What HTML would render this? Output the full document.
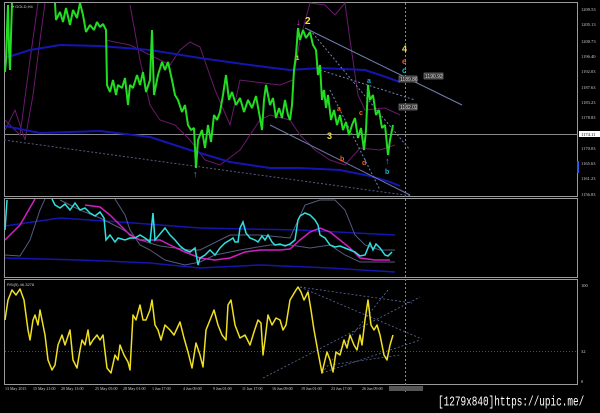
<!DOCTYPE html>
<html><head><style>
body{margin:0;background:#000;width:600px;height:413px;overflow:hidden;font-family:"Liberation Sans",sans-serif;position:relative}
svg{position:absolute;left:0;top:0}
.wm{position:absolute;left:438px;top:394px;width:160px;color:#fff;font-family:"Liberation Mono",monospace;font-size:9.4px;white-space:nowrap;transform:scaleY(1.45);transform-origin:0 0}
</style></head><body>
<svg width="600" height="413" viewBox="0 0 600 413">
<rect width="600" height="413" fill="#000"/>
<g fill="none" stroke="#9a9a9a" stroke-width="1">
<rect x="4.5" y="2.5" width="573" height="194"/>
<rect x="4.5" y="198.5" width="573" height="79"/>
<rect x="4.5" y="279.5" width="573" height="105"/>
</g>
<line x1="4" y1="134.5" x2="578" y2="134.5" stroke="#8a8a8a"/>
<line x1="405.5" y1="3" x2="405.5" y2="392" stroke="#888" stroke-dasharray="2,2"/>
<text x="12" y="8" fill="#ccc" font-size="4">▾ GOLD,H4</text>
<g fill="none">
<polyline stroke="#6a1a6a" stroke-width="1" points="5,130 15,110 25,140 33,95 40,40 45,3"/>
<polyline stroke="#6a1a6a" stroke-width="1" points="5,120 20,135 30,60 38,3"/>
<polyline stroke="#6a1a6a" stroke-width="1" points="130,5 140,60 150,105 160,120 175,125 190,140 205,160 220,165 240,150 260,120 270,115 290,120 300,135 315,150 330,160 345,165 360,148 380,150 395,145"/>
<polyline stroke="#6a1a6a" stroke-width="1" points="105,40 130,45 150,55 170,65 180,50 190,42 200,47 215,90 230,125 240,80 255,82 280,85 293,80 300,40 310,3 325,5 335,15 345,3 350,40 358,95 365,110 385,108 400,115"/>
<polyline stroke="#1515b0" stroke-width="2" points="5,58 30,50 60,45 100,46 150,50 200,58 250,65 290,70 320,68 365,70 380,75 400,82"/>
<polyline stroke="#1515b0" stroke-width="2" points="5,126 40,133 100,131 150,137 190,150 230,162 270,168 300,168 340,170 370,176 390,182 400,186"/>
<g stroke="#7080b0" stroke-width="1">
<line x1="305" y1="28" x2="462" y2="105"/>
<line x1="4" y1="140" x2="412" y2="196" stroke-dasharray="2,2" stroke="#555a80"/>
<line x1="270" y1="125" x2="410" y2="195"/>
<line x1="310" y1="30" x2="410" y2="150" stroke-dasharray="2,2"/>
<line x1="320" y1="70" x2="415" y2="100" stroke-dasharray="2,2"/>
<line x1="330" y1="90" x2="380" y2="190" stroke-dasharray="2,2"/>
</g>
<polyline stroke="#22dd22" stroke-width="2" stroke-linejoin="bevel" points="5,72 6,60 7,30 8,5 9,50 10,70 11,35 12,3"/>
<polyline stroke="#22dd22" stroke-width="2" stroke-linejoin="bevel" points="55,3 56,20 60,12 63,22 66,8 70,25 73,10 77,18 80,3 83,15 86,32 90,25 94,30 97,22 100,27 103,24 106,30 107,85 110,92 113,80 116,95 118,85 122,88 125,78 128,105 130,85 133,88 137,75 140,85 143,72 146,92 150,80 152,30 154,95 158,75 162,62 165,70 168,62 172,80 175,95 178,100 182,112 185,105 188,125 191,130 194,128 196,168 198,140 202,130 205,148 208,125 211,142 214,115 217,120 220,112 223,95 226,75 229,100 232,92 236,105 240,98 244,112 248,100 252,108 256,96 260,118 262,130 264,100 266,85 270,105 273,98 276,118 279,108 282,118 285,100 288,115 290,120 292,105 294,70 296,55 298,28 300,40 303,30 306,38 310,32 313,45 316,50 318,75 320,65 322,100 324,90 326,108 328,95 331,120 334,110 337,125 340,115 343,130 346,122 349,135 352,125 355,118 358,138 361,128 364,150 366,130 368,85 370,100 373,95 376,115 379,110 382,128 385,125 388,155 390,140 393,125"/>
</g>
<g font-family="Liberation Sans,sans-serif" font-weight="bold">
<text x="305" y="24" fill="#f0e040" font-size="10">2</text>
<text x="296" y="25" fill="#e040e0" font-size="9">↓</text>
<text x="296" y="60" fill="#f0e040" font-size="6">1</text>
<text x="402" y="52" fill="#f0e040" font-size="9">4</text>
<text x="402" y="64" fill="#ff5a1a" font-size="8">e</text>
<text x="402" y="73" fill="#20b0d0" font-size="8">c</text>
<text x="367" y="83" fill="#20b0d0" font-size="7">a</text>
<text x="337" y="111" fill="#ff5a1a" font-size="7">a</text>
<text x="359" y="115" fill="#ff5a1a" font-size="7">c</text>
<text x="327" y="139" fill="#f0e040" font-size="9">3</text>
<text x="340" y="161" fill="#ff5a1a" font-size="7">b</text>
<text x="362" y="165" fill="#ff5a1a" font-size="7">d</text>
<text x="385" y="174" fill="#20b0d0" font-size="7">b</text>
<text x="385" y="164" fill="#20b0d0" font-size="9">↑</text>
<text x="193" y="177" fill="#20b0d0" font-size="9">↑</text>
</g>
<g font-size="5" fill="#ddd" font-family="Liberation Sans,sans-serif">
<rect x="399" y="76" width="18" height="6" fill="#333" stroke="#aaa" stroke-width="0.5"/><text x="400" y="81">1189.86</text>
<rect x="424" y="73" width="19" height="6" fill="#333" stroke="#aaa" stroke-width="0.5"/><text x="425" y="78">1190.92</text>
<rect x="399" y="104" width="18" height="6" fill="#333" stroke="#aaa" stroke-width="0.5"/><text x="400" y="109">1182.02</text>
</g>
<g font-size="4.5" fill="#ccc" font-family="Liberation Serif,serif">
<text x="581" y="11">1209.53</text><text x="581" y="26">1205.13</text><text x="581" y="43">1200.73</text>
<text x="581" y="58">1196.40</text><text x="581" y="73">1192.03</text><text x="581" y="89">1187.63</text>
<text x="581" y="104">1183.23</text><text x="581" y="119">1178.83</text>
<rect x="579" y="131" width="21" height="6" fill="#fff"/><text x="581" y="136" fill="#000">1174.11</text>
<text x="581" y="150">1170.03</text><text x="581" y="165">1165.63</text><text x="581" y="180">1161.23</text><text x="581" y="196">1156.83</text>
<text x="581" y="287">100</text><text x="581" y="353">32</text><text x="581" y="383">0</text>
</g>
<rect x="577" y="161" width="2" height="12" fill="#2a5adf"/>
<g fill="none">
<polyline stroke="#1515b0" stroke-width="1.5" points="5,226 60,218 120,222 200,228 300,230 395,235"/>
<polyline stroke="#1515b0" stroke-width="1.5" points="5,258 80,260 150,263 200,268 260,265 330,268 395,272"/>
<polyline stroke="#555a80" stroke-width="1" points="5,255 20,256 30,240 40,210 45,199"/>
<polyline stroke="#555a80" stroke-width="1" points="60,200 80,210 100,218 120,228 140,240 160,246 190,250 200,250 220,240 230,235 260,235 290,238 305,205 320,200 335,200 345,210 355,235 365,245 380,250 395,250"/>
<polyline stroke="#555a80" stroke-width="1" points="115,199 125,215 130,230 140,245 150,250 165,260 185,265 200,262 215,255 240,250 270,245 290,245 310,248 330,245 345,255 360,262 380,262 395,262"/>
<polyline stroke="#d020c0" stroke-width="1.5" points="5,240 20,225 35,199"/>
<polyline stroke="#d020c0" stroke-width="1.5" points="85,205 100,207 110,215 120,225 130,235 140,240 160,240 170,245 185,252 200,258 215,260 230,258 245,252 260,250 280,250 290,249 300,240 310,232 320,228 330,232 340,240 350,248 360,258 375,260 390,260"/>
<polyline stroke="#30e0e0" stroke-width="1.5" points="5,230 7,200"/>
<polyline stroke="#30e0e0" stroke-width="1.5" points="52,199 55,205 60,208 65,204 70,210 75,203 80,210 85,208 90,213 95,216 100,212 104,218 106,240 110,235 115,242 118,238 125,240 130,238 135,238 140,235 145,238 150,242 153,213 155,240 160,234 165,228 170,235 175,240 180,246 185,250 190,252 195,248 198,265 200,258 205,255 210,250 215,255 220,248 225,243 230,240 233,238 235,242 238,242 240,228 243,222 246,233 250,238 255,240 258,242 262,236 265,240 268,235 272,242 275,245 280,244 285,246 290,244 295,240 298,220 300,216 305,213 310,215 315,220 318,225 320,235 325,238 330,245 335,247 340,246 345,248 350,250 355,252 360,256 365,255 370,243 373,250 376,244 380,248 385,255 388,256 392,252"/>
</g>
<line x1="5" y1="351.5" x2="577" y2="351.5" stroke="#3a4aa0" stroke-dasharray="1,2"/>
<g stroke="#5a6aa0" stroke-width="0.8" stroke-dasharray="2,2" fill="none">
<line x1="300" y1="287" x2="412" y2="303"/><line x1="263" y1="378" x2="420" y2="297"/>
<line x1="322" y1="373" x2="420" y2="340"/><line x1="300" y1="287" x2="422" y2="339"/>
<line x1="322" y1="373" x2="388" y2="290"/><line x1="330" y1="365" x2="400" y2="355"/>
</g>
<polyline fill="none" stroke="#f0e020" stroke-width="1.5" stroke-linejoin="round" points="5,320 8,300 12,290 16,295 20,289 24,300 28,330 30,340 33,320 35,315 38,325 40,310 43,325 45,335 48,360 52,370 55,365 58,345 62,335 65,345 70,330 73,360 77,368 80,350 82,340 85,345 88,330 90,345 93,340 97,335 100,340 103,335 107,368 111,373 115,355 118,360 120,345 124,355 128,362 130,370 133,315 136,320 140,305 143,320 146,320 150,310 152,300 155,325 158,330 161,340 165,325 170,330 174,335 180,322 184,338 188,352 192,368 196,343 200,355 203,367 206,330 210,320 214,310 218,325 222,335 226,340 228,305 231,300 235,325 240,338 245,335 250,345 254,332 258,320 261,323 263,355 265,340 268,315 272,325 276,318 280,320 283,330 286,325 290,300 296,290 298,287 301,292 304,300 308,292 311,310 314,330 318,352 322,373 325,360 327,352 330,360 333,372 336,352 340,355 344,340 347,348 350,335 354,345 357,350 360,335 362,345 365,320 368,300 371,325 374,330 377,325 380,335 384,355 387,360 390,345 393,335"/>
<text x="7" y="286" fill="#ccc" font-size="4">RSI(5) 46.3278</text>
<g font-size="4" fill="#ccc" font-family="Liberation Serif,serif">
<text x="5" y="390">13 May 2015</text><text x="33" y="390">15 May 21:00</text><text x="61" y="390">20 May 13:00</text>
<text x="95" y="390">25 May 05:00</text><text x="123" y="390">28 May 01:00</text><text x="152" y="390">1 Jun 17:00</text>
<text x="183" y="390">4 Jun 09:00</text><text x="213" y="390">9 Jun 01:00</text><text x="242" y="390">11 Jun 17:00</text>
<text x="272" y="390">16 Jun 09:00</text><text x="301" y="390">19 Jun 01:00</text><text x="331" y="390">23 Jun 17:00</text>
<text x="362" y="390">26 Jun 09:00</text>
<rect x="389" y="386" width="34" height="5" fill="#555"/>
</g>
</svg>
<div class="wm">[1279x840]https://upic.me/</div>
</body></html>
